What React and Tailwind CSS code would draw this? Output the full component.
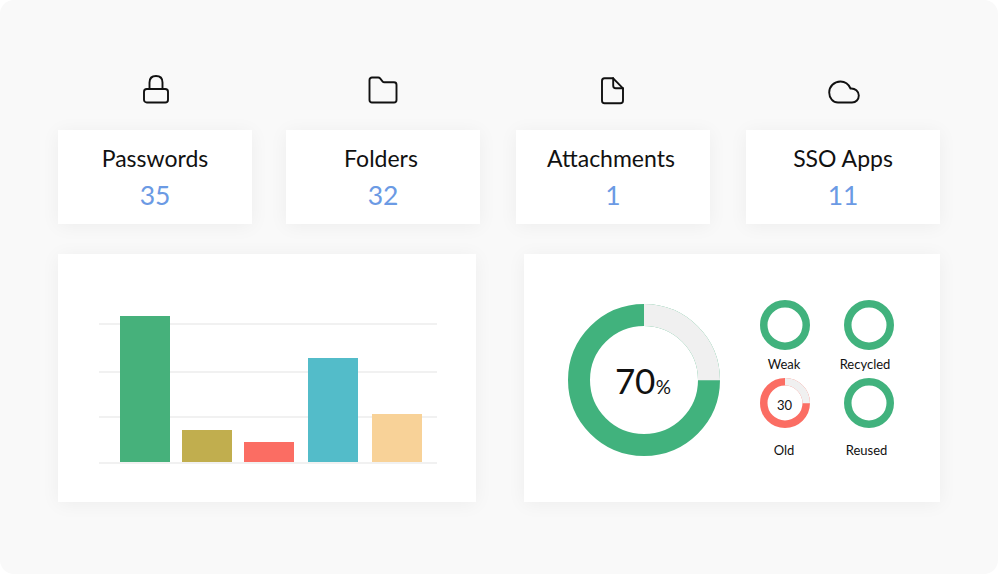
const BLUE = "text-[#6b9ae4]";

function Icon({ w, h, vb, className, children }) {
  return (
    <svg width={w} height={h} viewBox={vb} fill="none" stroke="#111" strokeWidth="1.9" strokeLinecap="round" strokeLinejoin="round" className={className}>
      {children}
    </svg>
  );
}

const icons = {
  lock: (
    <Icon w={28} h={30} vb="0 0 28 30" className="ml-[2px]">
      <rect x="2" y="14" width="24" height="13.5" rx="2.8" />
      <path d="M7.500 14V7.500C7.500 3.500 10 1 14 1s6.500 2.500 6.500 6.500V14" />
    </Icon>
  ),
  folder: (
    <Icon w={30} h={28} vb="0 0 30 28" className="mt-[1px]">
      <path d="M1.5 4C1.5 2.5 2.5 1.5 4 1.5h6.2c.8 0 1.4.3 1.9.9l2.6 3.2c.4.5 1 .7 1.7.7H26c1.5 0 2.500 1 2.500 2.500V24c0 1.500-1 2.500-2.500 2.500H4c-1.500 0-2.500-1-2.500-2.500z" />
    </Icon>
  ),
  file: (
    <Icon w={24} h={29} vb="0 0 24 29" className="mt-[1px] mr-[2px]">
      <path d="M4.500 2.300h8.700l9.800 10v12.200c0 1.700-1 2.800-2.700 2.800H4.600C3 27.300 2 26.200 2 24.500V5.100c0-1.700 1-2.800 2.500-2.800z" />
      <path d="M13.200 2.300v7.200c0 1.700 1 2.800 2.600 2.800H23" />
    </Icon>
  ),
  cloud: (
    <Icon w={32} h={24} vb="0 0 32 24" className="mt-[5px] ml-[2px]">
      <path d="M10 22.500C5 22.500 1.200 18 1.200 12.500 1.200 6.500 6 1.500 12.500 1.500c4.500 0 8 2.500 10 7 4.500-.5 8.300 3 8.300 7 0 4-2.800 7-6.800 7z" />
    </Icon>
  ),
};

const stats = [
  { icon: "lock", label: "Passwords", value: "35", gap: "", labelClass: "" },
  { icon: "folder", label: "Folders", value: "32", gap: "ml-[34px]", labelClass: "mr-[4px]" },
  { icon: "file", label: "Attachments", value: "1", gap: "ml-[36px]", labelClass: "mr-[4px]" },
  { icon: "cloud", label: "SSO Apps", value: "11", gap: "ml-[36px]", labelClass: "" },
];

function Stat({ icon, label, value, gap, labelClass }) {
  return (
    <div className={`flex flex-col w-[194px] ${gap}`}>
      <div className="h-[55px] flex items-start justify-center">{icons[icon]}</div>
      <div className="h-[94px] bg-white shadow-[0_2px_18px_rgba(0,0,0,0.05)] flex flex-col items-center pt-[14px]">
        <div className={`text-[23px] leading-[28px] text-[#111] ${labelClass}`}>{label}</div>
        <div className={`text-[26.5px] leading-[32px] mt-[7px] ${BLUE}`}>{value}</div>
      </div>
    </div>
  );
}

function Chart() {
  const lines = [69, 117, 162, 208];
  const bars = [
    { x: 62, y: 62, w: 50, h: 146, c: "#46b17b" },
    { x: 124, y: 176, w: 50, h: 32, c: "#c1ae4e" },
    { x: 186, y: 188, w: 50, h: 20, c: "#fb6d63" },
    { x: 250, y: 104, w: 50, h: 104, c: "#53bcc9" },
    { x: 314, y: 160, w: 50, h: 48, c: "#f8d298" },
  ];
  return (
    <svg width="418" height="248" viewBox="0 0 418 248">
      {lines.map((y) => (
        <rect key={y} x="41" y={y} width="338" height="2" fill="#f1f1f1" />
      ))}
      {bars.map((b) => (
        <rect key={b.x} x={b.x} y={b.y} width={b.w} height={b.h} fill={b.c} />
      ))}
    </svg>
  );
}

function Donut({ size, stroke, color, track, children, textClass }) {
  const r = (size - stroke) / 2;
  const c = 2 * Math.PI * r;
  const t = track ? 0.25 : 0;
  return (
    <div className="relative" style={{ width: size, height: size }}>
      <svg width={size} height={size} viewBox={`0 0 ${size} ${size}`} className="block">
        <circle cx={size / 2} cy={size / 2} r={r} fill="none" stroke={color} strokeWidth={stroke} />
        {track && (
          <circle
            cx={size / 2}
            cy={size / 2}
            r={r}
            fill="none"
            stroke="#f0f0f0"
            strokeWidth={stroke}
            strokeDasharray={`${c * t} ${c}`}
            transform={`rotate(-90 ${size / 2} ${size / 2})`}
          />
        )}
      </svg>
      {children && <div className={`absolute inset-0 flex items-center justify-center text-[#111] ${textClass}`}>{children}</div>}
    </div>
  );
}

function Gauge({ label, labelClass, color = "#41b27d", track, children }) {
  return (
    <div className="flex flex-col items-center w-[50px]">
      <Donut size={50} stroke={7.5} color={color} track={track} textClass="text-[13px] pt-[6px] pr-[1px]">
        {children}
      </Donut>
      <div className={`text-[13px] leading-[14px] whitespace-nowrap text-[#111] ${labelClass}`}>{label}</div>
    </div>
  );
}

export default function App() {
  return (
    <div className="w-[998px] h-[574px] bg-white overflow-hidden font-['Lato','Liberation_Sans',sans-serif]">
      <div className="w-full h-full bg-[#f9f9f9] rounded-[14px] pt-[75px] pl-[58px]">
        <div className="flex">
          {stats.map((s) => (
            <Stat key={s.label} {...s} />
          ))}
        </div>
        <div className="flex mt-[30px]">
          <div className="w-[418px] h-[248px] bg-white shadow-[0_2px_18px_rgba(0,0,0,0.05)]">
            <Chart />
          </div>
          <div className="w-[416px] h-[248px] ml-[48px] bg-white shadow-[0_2px_18px_rgba(0,0,0,0.05)] flex items-start pl-[44px] pt-[46px]">
            <div className="mt-[4px]">
              <Donut size={152} stroke={22} color="#41b27d" track textClass="pr-[2px]">
                <span className="flex items-baseline gap-[1px]">
                  <span className="text-[35px] leading-none tracking-[-0.5px]">70</span>
                  <span className="text-[19px] leading-none">%</span>
                </span>
              </Donut>
            </div>
            <div className="ml-[40px] grid grid-cols-[50px_50px] gap-x-[34px]">
              <Gauge label="Weak" labelClass="mt-[7px] mr-[2px]" />
              <Gauge label="Recycled" labelClass="mt-[7px] mr-[8px]" />
              <div className="mt-[7px]">
                <Gauge label="Old" labelClass="mt-[15px] mr-[2px]" color="#fb6d63" track>30</Gauge>
              </div>
              <div className="mt-[7px]">
                <Gauge label="Reused" labelClass="mt-[15px] mr-[5px]" />
              </div>
            </div>
          </div>
        </div>
      </div>
    </div>
  );
}
